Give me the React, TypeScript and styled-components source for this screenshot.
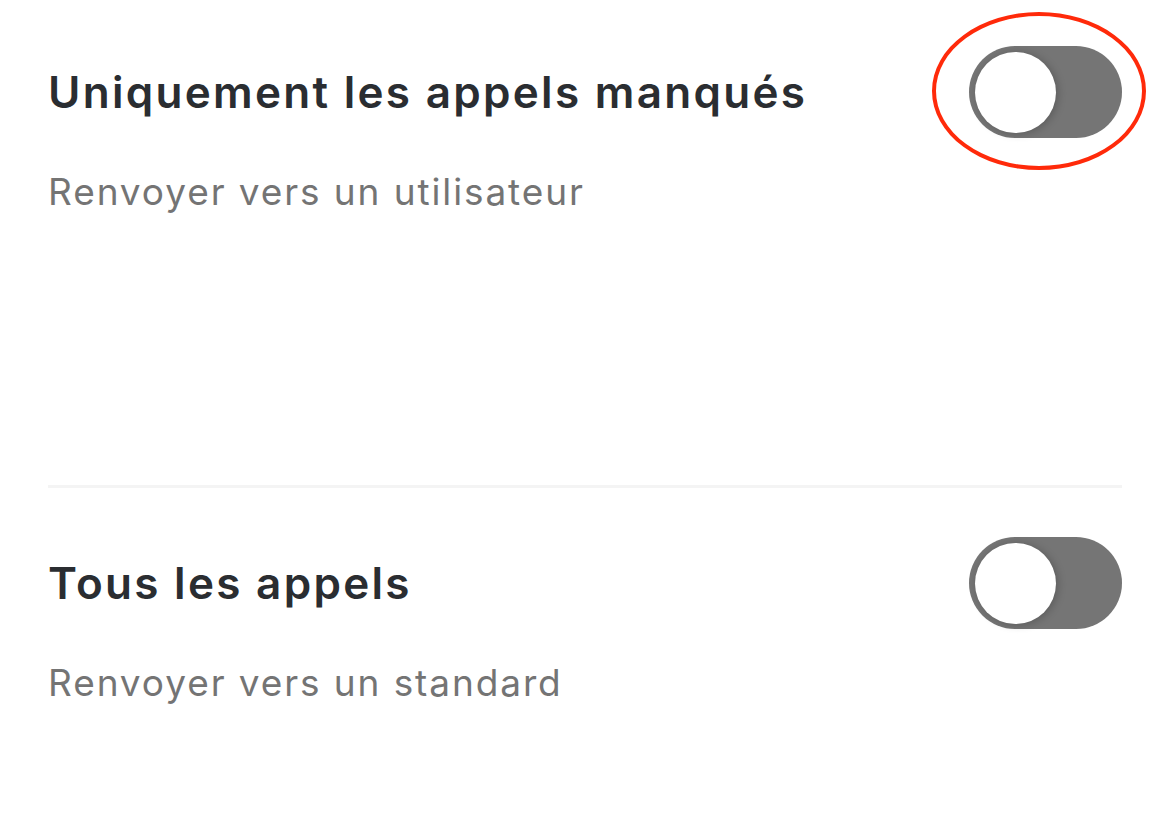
import * as React from 'react';
import styled, { createGlobalStyle } from 'styled-components';

const GlobalStyle = createGlobalStyle`
  html, body {
    margin: 0;
    padding: 0;
    background: #ffffff;
  }
  body {
    font-family: Inter, "Noto Sans", "Liberation Sans", sans-serif;
    overflow: hidden;
  }
`;

const Screen = styled.div`
  width: 1170px;
  height: 814px;
  padding: 0 48px;
  box-sizing: border-box;
  background: #fff;
  overflow: hidden;
`;

const Row = styled.div`
  display: flex;
  flex-direction: column;
  padding-top: 46px;
  height: 439px;
`;

const Header = styled.div`
  display: flex;
  align-items: center;
  justify-content: space-between;
`;

const Title = styled.h3`
  margin: 0;
  font-size: 44px;
  font-weight: 600;
  color: #2a2d31;
  letter-spacing: 2.3px;
`;

const Subtitle = styled.p`
  margin: 32px 0 0;
  font-size: 37px;
  font-weight: 400;
  line-height: 1.2;
  color: #747474;
  letter-spacing: 1.9px;
`;

const Divider = styled.hr`
  margin: 0 0 3px;
  border: none;
  height: 3px;
  background: #f4f4f4;
`;

const SwitchWrap = styled.div`
  position: relative;
  flex-shrink: 0;
`;

const Track = styled.button<{ $on: boolean }>`
  position: relative;
  display: block;
  width: 153px;
  height: 92px;
  padding: 0;
  border: none;
  border-radius: 46px;
  background: ${(p) => (p.$on ? '#3a8d5a' : '#757575')};
  cursor: pointer;
`;

const Knob = styled.span<{ $on: boolean }>`
  position: absolute;
  top: 5.5px;
  left: ${(p) => (p.$on ? '66px' : '6px')};
  width: 81px;
  height: 81px;
  border-radius: 50%;
  background: #fff;
  box-shadow: 2px 1px 8px rgba(0, 0, 0, 0.22);
`;

const Highlight = styled.span`
  position: absolute;
  left: -37px;
  top: -34px;
  width: 214px;
  height: 158px;
  border: 4px solid #ff2a0a;
  border-radius: 50%;
  box-sizing: border-box;
  pointer-events: none;
`;

interface SwitchProps {
  on: boolean;
  circled?: boolean;
  onToggle: () => void;
}

function Switch({ on, circled, onToggle }: SwitchProps) {
  return (
    <SwitchWrap>
      <Track $on={on} onClick={onToggle} aria-pressed={on}>
        <Knob $on={on} />
      </Track>
      {circled && <Highlight />}
    </SwitchWrap>
  );
}

export default function App() {
  const [missedOnly, setMissedOnly] = React.useState(false);
  const [allCalls, setAllCalls] = React.useState(false);

  return (
    <Screen>
      <GlobalStyle />
      <Row>
        <Header>
          <Title>Uniquement les appels manqués</Title>
          <Switch
            on={missedOnly}
            circled
            onToggle={() => setMissedOnly(!missedOnly)}
          />
        </Header>
        <Subtitle>Renvoyer vers un utilisateur</Subtitle>
      </Row>
      <Divider />
      <Row>
        <Header>
          <Title>Tous les appels</Title>
          <Switch on={allCalls} onToggle={() => setAllCalls(!allCalls)} />
        </Header>
        <Subtitle>Renvoyer vers un standard</Subtitle>
      </Row>
    </Screen>
  );
}
